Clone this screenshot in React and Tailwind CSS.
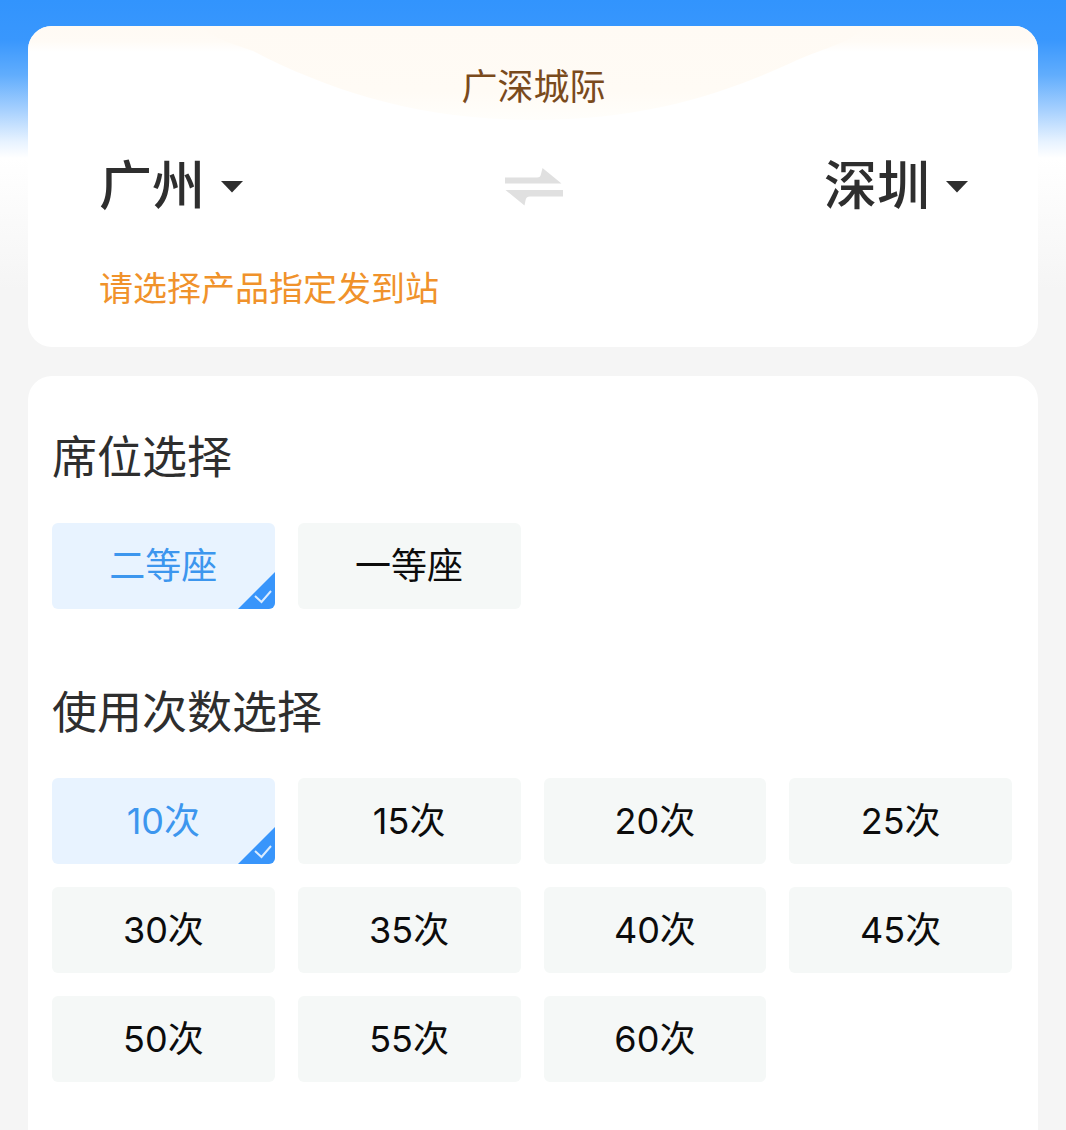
import { useState } from 'react';

const CITIES = ['广州', '深圳'];
const SEATS = ['二等座', '一等座'];
const TIMES = [10, 15, 20, 25, 30, 35, 40, 45, 50, 55, 60].map((n) => `${n}次`);

function CitySelect({ label, value, onChange }) {
    return (
        <label className="flex h-20 items-center gap-3">
            <span className="sr-only">{label}</span>
            <select
                value={value}
                onChange={(e) => onChange(e.target.value)}
                className="appearance-none [field-sizing:content] h-20 pr-1 bg-transparent outline-none text-[53px] font-medium text-[#2e2e2e]"
            >
                {CITIES.map((city) => (
                    <option key={city} value={city}>{city}</option>
                ))}
            </select>
            <svg width="22" height="12" viewBox="0 0 22 12" fill="#2e2e2e" aria-hidden="true">
                <path d="M0 0h22L11 11.5z" />
            </svg>
        </label>
    );
}

function SwapIcon() {
    return (
        <svg width="60" height="38" viewBox="0 0 60 38" fill="#e0e0e0" aria-hidden="true">
            <path d="M1 9.5H33q3.500 0 4-3.500L38.500 0L57.500 15.500H1z" />
            <path d="M59 22V28.500H26q-4 0-4.500 4L20.500 37.500L1.500 22z" />
        </svg>
    );
}

function OptionGroup({ title, name, options, value, onChange }) {
    return (
        <fieldset>
            <legend className="text-[45px] leading-[64px] text-[#2e2e2e]">{title}</legend>
            <div className="mt-[33px] grid grid-cols-4 gap-[23px]">
                {options.map((option) => {
                    const active = option === value;
                    return (
                        <label
                            key={option}
                            className={`relative flex h-[86px] items-center justify-center overflow-hidden rounded-md text-[36px] leading-[60px] cursor-pointer ${
                                active ? 'bg-[#e8f3ff] text-[#3c96ee]' : 'bg-[#f5f8f7] text-[#0c0c0c]'
                            }`}
                        >
                            <input
                                type="radio"
                                name={name}
                                value={option}
                                checked={active}
                                onChange={() => onChange(option)}
                                className="sr-only"
                            />
                            {option}
                            {active && (
                                <svg className="absolute right-0 bottom-0" width="37" height="37" viewBox="0 0 37 37" aria-hidden="true">
                                    <path d="M37 0V37H0z" fill="#3895fb" />
                                    <path d="M17 24l6.500 6L33 19" fill="none" stroke="#d9ebff" strokeWidth="2" />
                                </svg>
                            )}
                        </label>
                    );
                })}
            </div>
        </fieldset>
    );
}

export default function App() {
    const [from, setFrom] = useState('广州');
    const [to, setTo] = useState('深圳');
    const [seat, setSeat] = useState(SEATS[0]);
    const [times, setTimes] = useState(TIMES[0]);

    const swap = () => {
        setFrom(to);
        setTo(from);
    };

    return (
        <div className="flex min-h-screen flex-col gap-[29px] px-[28px] pt-[26px] bg-[#f5f5f5] bg-[linear-gradient(to_bottom,#3294fd_0px,#3997fd_40px,#61adfd_75px,#a6d0fe_110px,#e8f3ff_142px,#ffffff_158px,#fbfbfb_210px,#f5f5f5_290px)] font-[Inter,'Noto_Sans_CJK_SC',sans-serif]">
            <section className="relative overflow-hidden rounded-[24px] bg-white pt-[37px] pr-[70px] pb-[34px] pl-[71px]">
                {/* cream wave behind the line name */}
                <svg
                    className="absolute inset-x-0 top-0 h-[94px] w-full"
                    viewBox="0 0 1010 94"
                    preserveAspectRatio="none"
                    aria-hidden="true"
                >
                    <defs>
                        <linearGradient id="strip" x1="0" y1="0" x2="0" y2="1">
                            <stop offset="0" stopColor="#fffaf4" />
                            <stop offset="0.6" stopColor="#fffbf6" />
                            <stop offset="1" stopColor="#ffffff" />
                        </linearGradient>
                        <linearGradient id="wave" x1="0" y1="0" x2="0" y2="1">
                            <stop offset="0" stopColor="#fffaf4" />
                            <stop offset="0.7" stopColor="#fffbf5" />
                            <stop offset="1" stopColor="#fffefb" />
                        </linearGradient>
                    </defs>
                    <rect width="1010" height="26" fill="url(#strip)" />
                    <path d="M170 0C190 14 205 18 225 25C300 64 390 94 505 94C620 94 700 66 765 36C790 24 820 18 840 0z" fill="url(#wave)" />
                </svg>
                <div className="relative">
                    <h1 className="text-center text-[36px] leading-[48px] text-[#7a4a1c]">广深城际</h1>
                    <div className="mt-9 grid grid-cols-[1fr_auto_1fr] items-center">
                        <CitySelect label="出发城市" value={from} onChange={setFrom} />
                        <button type="button" onClick={swap} aria-label="交换出发和到达城市">
                            <SwapIcon />
                        </button>
                        <div className="flex justify-end">
                            <CitySelect label="到达城市" value={to} onChange={setTo} />
                        </div>
                    </div>
                    <p className="mt-[38px] text-[34px] leading-[48px] text-[#f0922b]">请选择产品指定发到站</p>
                </div>
            </section>

            <section className="flex grow flex-col gap-[72px] rounded-t-[24px] bg-white pt-[50px] pr-[26px] pb-12 pl-6">
                <OptionGroup title="席位选择" name="seat" options={SEATS} value={seat} onChange={setSeat} />
                <OptionGroup title="使用次数选择" name="times" options={TIMES} value={times} onChange={setTimes} />
            </section>
        </div>
    );
}
